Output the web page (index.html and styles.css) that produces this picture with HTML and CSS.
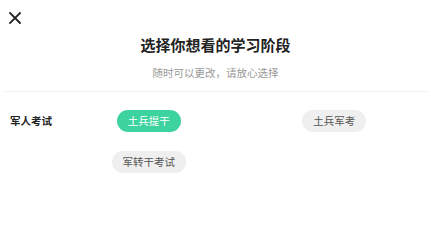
FILE: index.html
```html
<!DOCTYPE html>
<html lang="zh-CN">
<head>
<meta charset="utf-8">
<link rel="stylesheet" href="styles.css">
</head>
<body>
<div class="sheet">
  <div class="topbar">
    <svg class="close" width="12" height="12" viewBox="0 0 12 12"><path d="M1 1 L11 11 M11 1 L1 11" stroke="#222" stroke-width="1.8" stroke-linecap="square" fill="none"/></svg>
  </div>
  <div class="title">选择你想看的学习阶段</div>
  <div class="subtitle">随时可以更改，请放心选择</div>
  <div class="divider"></div>
  <div class="row">
    <div class="label">军人考试</div>
    <div class="options">
      <span class="pill active">土兵提干</span>
      <span class="pill">土兵军考</span>
      <span class="pill">军转干考试</span>
    </div>
  </div>
</div>
</body>
</html>
```

FILE: styles.css
```css
html, body {
  margin: 0;
  padding: 0;
  background: #fff;
}
body {
  font-family: "Noto Sans CJK SC", "Noto Sans", sans-serif;
  color: #222;
}
.sheet {
  width: 431px;
}
.topbar {
  height: 36px;
  box-sizing: border-box;
  padding: 12px 0 0 9px;
}
.close {
  display: block;
}
.title {
  text-align: center;
  font-size: 15px;
  font-weight: 700;
  line-height: 18px;
  color: #222;
}
.subtitle {
  margin-top: 12px;
  text-align: center;
  font-size: 10.5px;
  line-height: 14px;
  color: #999;
}
.divider {
  margin: 11px 3px 0 4px;
  height: 1px;
  background: #f2f2f2;
}
.row {
  display: flex;
  padding: 18px 4px 0 10px;
}
.label {
  width: 46px;
  flex: none;
  font-size: 10.5px;
  font-weight: 700;
  line-height: 22px;
  color: #222;
}
.options {
  flex: 1;
  display: grid;
  grid-template-columns: 1fr 1fr;
  row-gap: 19px;
  justify-items: center;
}
.pill {
  display: inline-block;
  height: 22px;
  line-height: 22px;
  padding: 0 11px;
  border-radius: 11px;
  background: #efefef;
  color: #555;
  font-size: 10.5px;
}
.pill.active {
  background: #3dd39f;
  color: #fff;
}
```
